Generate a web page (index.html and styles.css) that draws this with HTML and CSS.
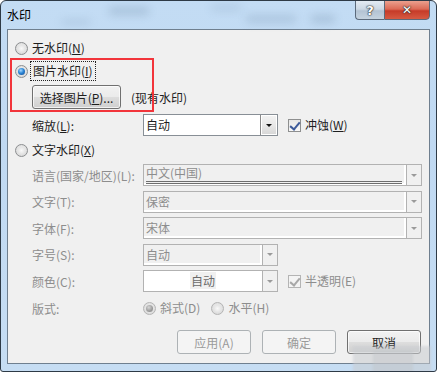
FILE: index.html
```html
<!DOCTYPE html>
<html lang="zh-CN">
<head>
<meta charset="utf-8">
<title>水印</title>
<link rel="stylesheet" href="styles.css">
</head>
<body>
<div class="win">
  <div class="titlebar">
    <div class="blob b1"></div>
    <div class="blob b2"></div>
    <div class="blob b3"></div>
    <div class="blob b4"></div>
    <div class="blob b5"></div>
    <span class="title">水印</span>
    <div class="caption">
      <div class="cbtn help">?</div>
      <div class="cbtn close">✕</div>
    </div>
  </div>
  <div class="panel">
    <div class="row radio-row r1">
      <span class="radio"></span><span class="lbl">无水印(<u>N</u>)</span>
    </div>
    <div class="row radio-row r2">
      <span class="radio on"></span><span class="lbl focus">图片水印(<u>I</u>)</span>
    </div>
    <div class="row indent r3">
      <div class="btn pick">选择图片(<u>P</u>)...</div>
      <span class="note">(现有水印)</span>
    </div>
    <div class="row indent field-row r4">
      <span class="flabel">缩放(<u>L</u>):</span>
      <div class="combo short">
        <span class="cval">自动</span>
        <span class="drop"><i class="tri"></i></span>
      </div>
      <span class="check on"></span><span class="lbl">冲蚀(<u>W</u>)</span>
    </div>
    <div class="row radio-row r5">
      <span class="radio"></span><span class="lbl">文字水印(<u>X</u>)</span>
    </div>
    <div class="fields">
      <div class="row indent field-row dis">
        <span class="flabel">语言(国家/地区)(L):</span>
        <div class="combo wide disabled">
          <span class="cval lang"><span class="ltxt">中文(中国)</span><span class="dline"></span></span>
          <span class="drop"><i class="tri"></i></span>
        </div>
      </div>
      <div class="row indent field-row dis">
        <span class="flabel">文字(T):</span>
        <div class="combo wide disabled">
          <span class="cval">保密</span>
          <span class="drop"><i class="tri"></i></span>
        </div>
      </div>
      <div class="row indent field-row dis">
        <span class="flabel">字体(F):</span>
        <div class="combo wide disabled">
          <span class="cval">宋体</span>
          <span class="drop"><i class="tri"></i></span>
        </div>
      </div>
      <div class="row indent field-row dis">
        <span class="flabel">字号(S):</span>
        <div class="combo short disabled">
          <span class="cval">自动</span>
          <span class="drop"><i class="tri"></i></span>
        </div>
      </div>
      <div class="row indent field-row dis">
        <span class="flabel">颜色(C):</span>
        <div class="combo short disabled-white">
          <span class="cval center"><span class="hl">自动</span></span>
          <span class="drop"><i class="tri"></i></span>
        </div>
        <span class="check on dis-check"></span><span class="lbl">半透明(E)</span>
      </div>
    </div>
    <div class="row indent field-row dis r11">
      <span class="flabel">版式:</span>
      <span class="radio on dis-radio"></span><span class="lbl">斜式(D)</span>
      <span class="radio dis-radio gap"></span><span class="lbl">水平(H)</span>
    </div>
    <div class="buttons">
      <div class="btn big disabled-btn">应用(A)</div>
      <div class="btn big disabled-btn">确定</div>
      <div class="btn big">取消</div>
    </div>
  </div>
  <div class="redbox"></div>
  <div class="wm wm1"></div>
  <div class="wm wm2"></div>
</div>
</body>
</html>
```

FILE: styles.css
```css
* { box-sizing: border-box; }
html, body { margin: 0; padding: 0; background: #ffffff; }
body {
  font-family: "Noto Sans CJK SC", "Noto Sans", sans-serif;
  font-size: 12px;
  color: #1e1e1e;
}
u { text-decoration: underline; text-underline-offset: 1px; }

.win {
  position: relative;
  width: 437px;
  height: 372px;
  border: 1px solid #2e3a46;
  border-radius: 6px 6px 3px 3px;
  background: linear-gradient(180deg, #c3dcf4 0%, #c0d9f2 40%, #c6ddf3 100%);
  overflow: hidden;
  display: flex;
  flex-direction: column;
}

.titlebar {
  position: relative;
  height: 28px;
  flex: none;
  display: flex;
  align-items: flex-start;
}
.blob {
  position: absolute;
  background: #6f8aa6;
  filter: blur(4px);
  opacity: 0.3;
  border-radius: 3px;
}
.b1 { left: 108px; top: 6px; width: 40px; height: 8px; }
.b2 { left: 210px; top: 4px; width: 30px; height: 6px; opacity: 0.2; }
.b3 { left: 310px; top: 14px; width: 24px; height: 8px; opacity: 0.3; }
.b4 { left: 60px; top: 18px; width: 30px; height: 6px; opacity: 0.2; }
.b5 { left: 245px; top: 14px; width: 50px; height: 8px; opacity: 0.25; }

.title {
  position: relative;
  margin: 7px 0 0 6px;
  font-size: 12px;
  line-height: 14px;
  color: #000;
}
.caption {
  position: relative;
  margin-left: auto;
  margin-right: 6px;
  display: flex;
  margin-top: -1px;
}
.cbtn {
  height: 20px;
  border: 1px solid #5b6a7b;
  display: flex;
  align-items: center;
  justify-content: center;
  font-family: "DejaVu Sans", sans-serif;
  font-weight: bold;
  color: #fff;
  text-shadow: 0 0 1px #2a2a2a, 0 0 1px #2a2a2a, 0 0 2px #333;
}
.help {
  width: 29px;
  border-radius: 0 0 0 4px;
  border-right: none;
  background: linear-gradient(180deg, #e3ebf3 0%, #ccd8e4 45%, #b3c3d3 55%, #c5d3df 100%);
  font-size: 13px;
}
.close {
  width: 46px;
  border-radius: 0 0 4px 0;
  background: linear-gradient(180deg, #eba08e 0%, #dc6a56 45%, #c63b28 55%, #d65a42 100%);
  font-size: 12px;
}

.panel {
  flex: 1;
  margin: 0 6px 7px 6px;
  border: 1px solid #6f7f8f;
  background: #f0f0f0;
  padding: 9px 8px 0 7px;
  display: flex;
  flex-direction: column;
}

.row { display: flex; align-items: center; }
.radio-row { height: 18px; }
.r2 { margin-top: 5px; }
.r3 { margin-top: 5px; height: 24px; }
.r4 { margin-top: 5px; }
.r5 { margin-top: 5px; }
.indent { margin-left: 17px; }
.field-row { height: 22px; }
.fields { display: flex; flex-direction: column; gap: 4.6px; margin-top: 5px; }
.r11 { margin-top: 7px; height: 18px; }

.lbl { white-space: nowrap; line-height: 16px; }
.radio + .lbl { margin-left: 4px; }
.check + .lbl { margin-left: 4px; }

.radio {
  width: 13px;
  height: 13px;
  border-radius: 50%;
  border: 1px solid #8c8e90;
  background: radial-gradient(circle at 50% 45%, #f4f4f4 0%, #e2e2e2 55%, #cfcfcf 100%);
  flex: none;
  position: relative;
}
.radio::after {
  content: "";
  position: absolute;
  left: 2px; top: 2px;
  width: 7px; height: 7px;
  border-radius: 50%;
  background: radial-gradient(circle at 50% 50%, #f9f9f9, #dcdcdc);
}
.radio.on::after {
  background: radial-gradient(circle at 40% 35%, #a8d8ff 0%, #2b86d6 45%, #15468a 100%);
}
.dis-radio { border-color: #b4b4b4; }
.dis-radio.on::after { background: radial-gradient(circle at 40% 35%, #d6d6d6 0%, #9a9a9a 60%, #8a8a8a 100%); }
.dis-radio.gap { margin-left: 11px; }

.focus {
  outline: 1px dotted #222;
  outline-offset: 1px;
  padding: 0 1px;
}

.btn {
  display: flex;
  align-items: center;
  justify-content: center;
  height: 24px;
  border: 1px solid #707070;
  border-radius: 3px;
  background: linear-gradient(180deg, #f2f2f2 0%, #ebebeb 48%, #dddddd 52%, #cfcfcf 100%);
  box-shadow: inset 0 0 0 1px rgba(255,255,255,0.7);
  color: #1e1e1e;
  white-space: nowrap;
}
.pick { width: 89px; }
.note { margin-left: 10px; }

.flabel { width: 111px; flex: none; white-space: nowrap; }
.dis .flabel, .dis .lbl { color: #8d8d8d; }

.combo {
  height: 22px;
  display: flex;
  border: 1px solid #a5acb2;
  background: #fff;
  flex: none;
}
.combo.short { width: 135px; }
.combo.wide { width: 279px; }
.cval {
  flex: 1;
  padding-left: 2px;
  line-height: 20px;
  white-space: nowrap;
}
.cval.center { text-align: center; }
.hl { background: #f0f0f0; padding: 0 1px; }
.drop {
  width: 17px;
  flex: none;
  border-left: 1px solid #9c9c9c;
  background: linear-gradient(180deg, #f3f3f3 0%, #e8e8e8 50%, #d6d6d6 100%);
  display: flex;
  align-items: center;
  justify-content: center;
}
.tri {
  width: 0; height: 0;
  border-left: 3px solid transparent;
  border-right: 3px solid transparent;
  border-top: 3px solid #111;
}
.r4 .combo { border-color: #888f96; }
.r4 .drop { border-left-color: #8a8a8a; box-shadow: inset 0 0 0 1px #fff; }

.disabled {
  background: #f0f0f0;
  border-color: #b2b2b2;
  box-shadow: inset 0 -2px 0 #ffffff;
  color: #8d8d8d;
}
.disabled .drop, .disabled-white .drop {
  background: #f0f0f0;
  border-left: 2px solid #fff;
  box-shadow: inset 1px 0 0 #b2b2b2;
}
.disabled .tri, .disabled-white .tri { border-top-color: #9a9a9a; }
.disabled-white {
  background: #fff;
  border-color: #b2b2b2;
  color: #6a6a6a;
}
.lang {
  display: flex;
  flex-direction: column;
  margin-right: 2px;
  padding-left: 2px;
}
.ltxt {
  height: 15px;
  line-height: 15px;
  margin-top: 0;
}
.dline {
  margin-top: 1px;
  margin-left: 0;
  height: 3px;
  border-top: 1px solid #6e6e6e;
  border-bottom: 1px solid #6e6e6e;
}

.check {
  width: 13px;
  height: 13px;
  border: 1px solid #8e8f8f;
  background: linear-gradient(180deg, #e6e6e6, #f8f8f8);
  margin-left: 10px;
  flex: none;
  position: relative;
}
.check.on::after {
  content: "";
  position: absolute;
  left: 3px; top: 0px;
  width: 4px; height: 8px;
  border-right: 2px solid #3c5a9a;
  border-bottom: 2px solid #3c5a9a;
  transform: rotate(40deg);
}
.dis-check { border-color: #b4b4b4; background: #f4f4f4; }
.dis-check.on::after { border-color: #a8a8a8; }

.buttons {
  margin-top: 13px;
  display: flex;
  justify-content: flex-end;
  gap: 11px;
}
.big { width: 74px; }
.disabled-btn {
  border-color: #adb2b5;
  background: #f4f4f4;
  box-shadow: none;
  color: #9a9a9a;
}

.redbox {
  position: absolute;
  left: 9px;
  top: 57px;
  width: 144px;
  height: 54px;
  border: 2px solid #f2353b;
  pointer-events: none;
}

.wm {
  position: absolute;
  background: #c9ccd0;
  filter: blur(1px);
  opacity: 0.75;
}
.wm1 { left: 352px; top: 345px; width: 78px; height: 26px; opacity: 0.55; }
.wm2 { left: 372px; top: 350px; width: 40px; height: 22px; background: #c0c3c8; opacity: 0.4; }
```
